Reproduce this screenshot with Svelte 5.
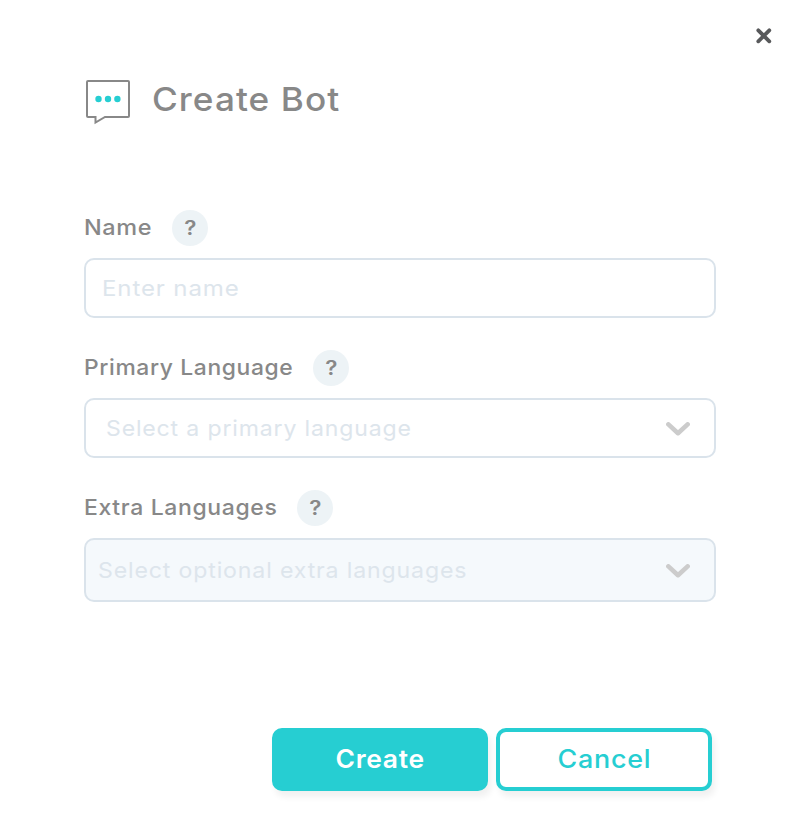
<script>
  const fields = [
    { id: 'name', label: 'Name', hint: 'Enter name', kind: 'text' },
    { id: 'primary', label: 'Primary Language', hint: 'Select a primary language', kind: 'select' },
    { id: 'extra', label: 'Extra Languages', hint: 'Select optional extra languages', kind: 'select' }
  ];
</script>

<main class="dialog">
  <div class="top">
    <button class="close" aria-label="Close">
      <svg width="16" height="16" viewBox="0 0 16 16"><path d="M2.3 2.3 13.3 13.3M13.3 2.3 2.3 13.3" /></svg>
    </button>
  </div>

  <header>
    <svg class="logo" width="46" height="46" viewBox="0 0 46 46">
      <path d="M3 2H43Q44 2 44 3V37Q44 38 43 38H20L10.5 43.5V38H3Q2 38 2 37V3Q2 2 3 2Z" />
      <circle cx="13.5" cy="20" r="3.2" />
      <circle cx="23" cy="20" r="3.2" />
      <circle cx="32.4" cy="20" r="3.2" />
    </svg>
    <h1>Create Bot</h1>
  </header>

  <form>
    {#each fields as field}
      <section class="field {field.id}">
        <div class="label"><span class="caption">{field.label}</span><span class="help"><span>?</span></span></div>
        <div class="control">
          <span class="hint">{field.hint}</span>
          {#if field.kind === 'select'}
            <svg width="24" height="14" viewBox="0 0 24 14"><path d="M2.4 2.4 12 11.2 21.6 2.4" /></svg>
          {/if}
        </div>
      </section>
    {/each}
  </form>

  <footer>
    <button class="create"><span>Create</span></button>
    <button class="cancel"><span>Cancel</span></button>
  </footer>
</main>

<style>
  :global(body) { background: #fff; }
  .dialog {
    box-sizing: border-box;
    width: 800px;
    height: 839px;
    padding: 0 84px;
    font-family: Inter, "Liberation Sans", sans-serif;
    color: #888;
    overflow: hidden;
  }
  button { font: inherit; padding: 0; cursor: pointer; }
  svg { display: block; fill: none; flex: none; }
  .top { display: flex; justify-content: flex-end; height: 78px; padding-top: 28px; box-sizing: border-box; margin-right: -56px; }
  .close { width: 16px; height: 16px; border: 0; background: none; }
  .close path { stroke: #58595b; stroke-width: 3.8; stroke-linecap: round; }
  header { display: flex; height: 132px; align-items: flex-start; padding-left: 1px; }
  .logo { margin-top: 1px; }
  .logo path { stroke: #888; stroke-width: 2; }
  .logo circle { fill: #26ced2; }
  h1 { margin: 0 0 0 21px; font-size: 33px; line-height: 42px; font-weight: 500; letter-spacing: 1px; white-space: nowrap; transform: scaleX(1.065); transform-origin: left; }
  .field { height: 140px; }
  .label { display: flex; align-items: center; height: 36px; margin-bottom: 12px; font-size: 22px; font-weight: 500; white-space: nowrap; }
  .caption { line-height: 34px; height: 36px; letter-spacing: 0.6px; transform-origin: left; }
  .name .caption { width: 88px; transform: scaleX(1.065); }
  .primary .caption { width: 229px; transform: scaleX(1.039); }
  .extra .caption { width: 213px; transform: scaleX(1.045); }
  .help { display: flex; align-items: center; justify-content: center; width: 36px; height: 36px; border-radius: 50%; background: #edf3f6; font-size: 20px; font-weight: 600; }
  .help span { transform: scaleX(1.12); }
  .control {
    box-sizing: border-box;
    display: flex;
    align-items: center;
    justify-content: space-between;
    height: 60px;
    padding: 0 24px 0 16px;
    border: 2px solid #dae3eb;
    border-radius: 10px;
    color: #dde5ec;
    font-size: 22px;
    white-space: nowrap;
  }
  .primary .control { padding-left: 20px; }
  .extra .control { height: 64px; padding-left: 12px; background: #f5f9fc; }
  .control path { stroke: #ccc; stroke-width: 4.6; stroke-linecap: round; stroke-linejoin: round; }
  .control svg { margin-top: 2px; }
  .hint { letter-spacing: 0.8px; transform-origin: left; transform: scaleX(1.048); }
  .name .hint { transform: scaleX(1.093); }
  .extra .hint { transform: scaleX(1.051); }
  footer { display: flex; gap: 8px; justify-content: flex-end; margin: 98px 4px 0 0; }
  footer button {
    box-sizing: border-box;
    width: 216px;
    height: 63px;
    border: 4px solid #26ced2;
    border-radius: 10px;
    box-shadow: 3px 6px 6px rgba(0, 0, 0, 0.06);
    font-size: 25.5px;
    font-weight: 500;
    letter-spacing: 0.7px;
    padding-bottom: 2px;
  }
  footer span { display: inline-block; transform: scaleX(1.055); }
  .create { background: #26ced2; color: #fff; }
  .create span { font-weight: 600; transform: scaleX(1.035); }
  .cancel { background: #fff; color: #26ced2; }
</style>
